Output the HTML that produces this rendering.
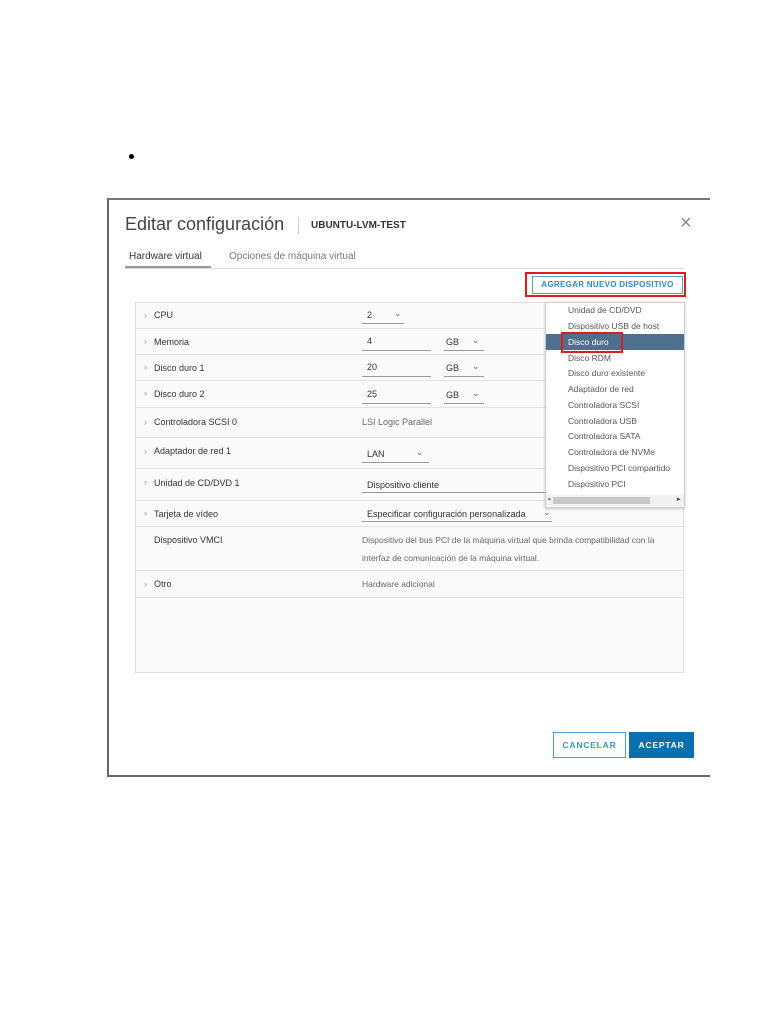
<!DOCTYPE html>
<html><head><meta charset="utf-8"><style>
*{margin:0;padding:0;box-sizing:border-box}
body{width:768px;height:1024px;background:#fff;position:relative;font-family:"Liberation Sans",sans-serif;overflow:hidden}
.a{position:absolute;white-space:nowrap}
.s{font-size:9px;color:#333}
.g{color:#666}
.row{position:absolute;left:136px;width:547px;border-bottom:1px solid #e2e2e2}
.ch{position:absolute;left:8px;color:#999;font-size:9px}
.ul{position:absolute;border-bottom:1px solid #999;height:1px}
.dd{font-size:8.5px;color:#555;position:absolute;left:568px}
</style></head><body>
<div class="a" style="left:129px;top:154px;width:5px;height:5px;border-radius:50%;background:#000"></div>
<div class="a" style="left:107px;top:198px;width:603px;height:579px;border-top:2px solid #777;border-left:2px solid #666;border-bottom:2px solid #666;background:#fff"></div>
<div class="a" style="left:125px;top:214px;font-size:18px;color:#444">Editar configuración</div>
<div class="a" style="left:298px;top:217px;width:1px;height:17px;background:#ccc"></div>
<div class="a" style="left:311px;top:220px;font-size:10px;font-weight:bold;color:#333">UBUNTU-LVM-TEST</div>
<div class="a" style="left:680px;top:212px;font-size:20px;color:#888">×</div>
<div class="a" style="left:129px;top:251px;font-size:10px;color:#333">Hardware virtual</div>
<div class="a" style="left:229px;top:251px;font-size:10px;color:#777">Opciones de máquina virtual</div>
<div class="a" style="left:125px;top:268px;width:560px;height:1px;background:#ddd"></div>
<div class="a" style="left:125px;top:266px;width:86px;height:2px;background:#999"></div>
<div class="a" style="left:525px;top:272px;width:161px;height:25px;border:2px solid #e01b1b"></div>
<div class="a" style="left:532px;top:276px;width:151px;height:18px;border:1px solid #4aa0d0;font-size:8px;color:#2a8cc4;font-weight:bold;text-align:center;line-height:16px;letter-spacing:.3px">AGREGAR NUEVO DISPOSITIVO</div>
<div class="a" style="left:135px;top:302px;width:549px;height:371px;background:#fafafa;border:1px solid #ddd"></div>
<div class="row" style="top:303px;height:26px"><span class="ch" style="top:7px">›</span><span class="a s" style="left:18px;top:7px">CPU</span></div>
<div class="row" style="top:329px;height:26px"><span class="ch" style="top:7px">›</span><span class="a s" style="left:18px;top:8px">Memoria</span></div>
<div class="row" style="top:355px;height:26px"><span class="ch" style="top:7px">›</span><span class="a s" style="left:18px;top:8px">Disco duro 1</span></div>
<div class="row" style="top:381px;height:27px"><span class="ch" style="top:7px">›</span><span class="a s" style="left:18px;top:8px">Disco duro 2</span></div>
<div class="row" style="top:408px;height:30px"><span class="ch" style="top:9px">›</span><span class="a s" style="left:18px;top:9px">Controladora SCSI 0</span></div>
<div class="row" style="top:438px;height:31px"><span class="ch" style="top:8px">›</span><span class="a s" style="left:18px;top:8px">Adaptador de red 1</span></div>
<div class="row" style="top:469px;height:32px"><span class="ch" style="top:8px">›</span><span class="a s" style="left:18px;top:9px">Unidad de CD/DVD 1</span></div>
<div class="row" style="top:501px;height:26px"><span class="ch" style="top:7px">›</span><span class="a s" style="left:18px;top:8px">Tarjeta de vídeo</span></div>
<div class="row" style="top:527px;height:44px"><span class="a s" style="left:18px;top:8px">Dispositivo VMCI</span></div>
<div class="row" style="top:571px;height:27px"><span class="ch" style="top:8px">›</span><span class="a s" style="left:18px;top:8px">Otro</span></div>
<span class="a s" style="left:367px;top:310px">2</span><span class="a g" style="left:394px;top:308px;font-size:9px">⌄</span><div class="ul" style="left:362px;top:323px;width:42px"></div>
<span class="a s" style="left:367px;top:336px">4</span><div class="ul" style="left:362px;top:350px;width:69px"></div>
<span class="a s" style="left:446px;top:337px">GB</span><span class="a g" style="left:472px;top:335px;font-size:9px">⌄</span><div class="ul" style="left:444px;top:350px;width:40px"></div>
<span class="a s" style="left:367px;top:362px">20</span><div class="ul" style="left:362px;top:376px;width:69px"></div>
<span class="a s" style="left:446px;top:363px">GB</span><span class="a g" style="left:472px;top:361px;font-size:9px">⌄</span><div class="ul" style="left:444px;top:376px;width:40px"></div>
<span class="a s" style="left:367px;top:389px">25</span><div class="ul" style="left:362px;top:403px;width:69px"></div>
<span class="a s" style="left:446px;top:390px">GB</span><span class="a g" style="left:472px;top:388px;font-size:9px">⌄</span><div class="ul" style="left:444px;top:403px;width:40px"></div>
<span class="a g" style="left:362px;top:417px;font-size:9px">LSI Logic Parallel</span>
<span class="a s" style="left:367px;top:449px">LAN</span><span class="a g" style="left:416px;top:447px;font-size:9px">⌄</span><div class="ul" style="left:362px;top:462px;width:67px"></div>
<span class="a s" style="left:367px;top:480px">Dispositivo cliente</span><div class="ul" style="left:362px;top:492px;width:185px"></div>
<span class="a s" style="left:367px;top:509px">Especificar configuración personalizada</span><span class="a g" style="left:543px;top:507px;font-size:9px">⌄</span><div class="ul" style="left:362px;top:521px;width:190px"></div>
<span class="a g" style="left:362px;top:531px;font-size:8.5px;line-height:18px;white-space:normal;width:320px">Dispositivo del bus PCI de la máquina virtual que brinda compatibilidad con la interfaz de comunicación de la máquina virtual.</span>
<span class="a g" style="left:362px;top:579px;font-size:8.5px">Hardware adicional</span>
<div class="a" style="left:545px;top:302px;width:140px;height:206px;background:#fff;border:1px solid #ccc;box-shadow:0 1px 3px rgba(0,0,0,.2);overflow:hidden">
<div class="a" style="left:0;top:31px;width:140px;height:16px;background:#4f6f8f"></div>
</div>
<span class="dd" style="top:305px">Unidad de CD/DVD</span>
<span class="dd" style="top:321px">Dispositivo USB de host</span>
<span class="dd" style="top:337px;color:#fff">Disco duro</span>
<span class="dd" style="top:353px">Disco RDM</span>
<span class="dd" style="top:368px">Disco duro existente</span>
<span class="dd" style="top:384px">Adaptador de red</span>
<span class="dd" style="top:400px">Controladora SCSI</span>
<span class="dd" style="top:416px">Controladora USB</span>
<span class="dd" style="top:431px">Controladora SATA</span>
<span class="dd" style="top:447px">Controladora de NVMe</span>
<span class="dd" style="top:463px;width:116px;overflow:hidden">Dispositivo PCI compartido</span>
<span class="dd" style="top:479px">Dispositivo PCI</span>
<div class="a" style="left:546px;top:495px;width:138px;height:11px;background:#f0f0f0"></div>
<div class="a" style="left:553px;top:497px;width:97px;height:7px;background:#c8c8c8"></div>
<span class="a" style="left:547px;top:495px;font-size:7px;color:#888">◂</span><span class="a" style="left:677px;top:495px;font-size:7px;color:#444">▸</span>
<div class="a" style="left:561px;top:332px;width:62px;height:21px;border:2px solid #e01b1b"></div>
<div class="a" style="left:553px;top:732px;width:73px;height:26px;border:1px solid #4aa0d0;background:#fff;font-size:8.5px;font-weight:bold;color:#3a96c8;text-align:center;line-height:24px;letter-spacing:.8px">CANCELAR</div>
<div class="a" style="left:629px;top:732px;width:65px;height:26px;background:#0a6fae;font-size:8.5px;font-weight:bold;color:#fff;text-align:center;line-height:26px;letter-spacing:.8px">ACEPTAR</div>
</body></html>
